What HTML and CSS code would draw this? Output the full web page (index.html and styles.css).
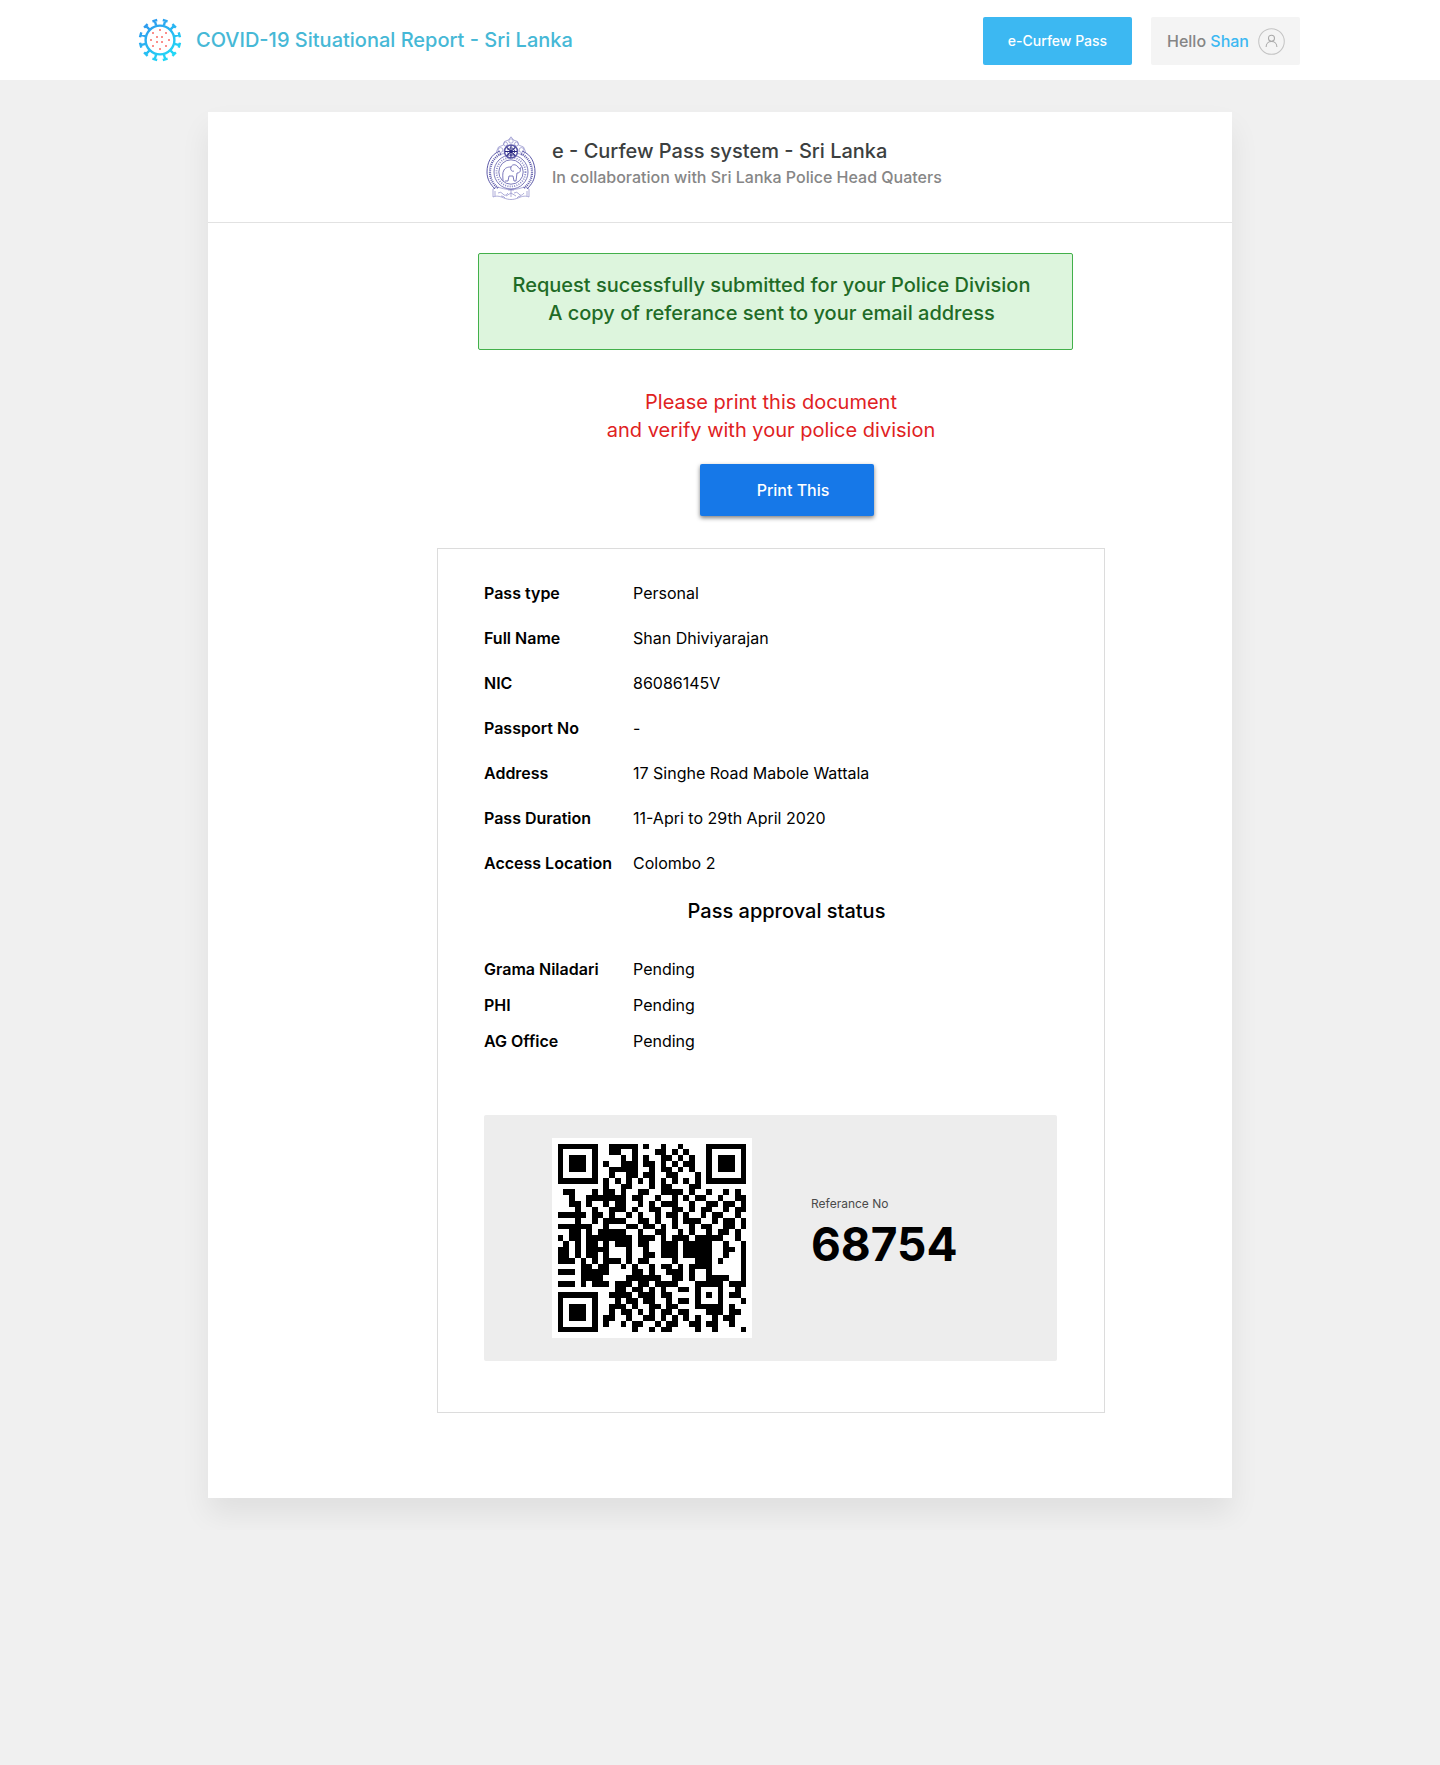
FILE: index.html
```html
<!DOCTYPE html>
<html lang="en">
<head>
<meta charset="utf-8">
<meta name="viewport" content="width=device-width, initial-scale=1">
<title>e-Curfew Pass - Sri Lanka</title>
<link rel="stylesheet" href="styles.css">
</head>
<body>
<header class="topbar">
  <div class="topbar-inner">
    <a class="brand" href="#">
      <svg class="brand-logo" viewBox="-22 -22 44 44" aria-hidden="true">
        <defs>
          <linearGradient id="virus" gradientUnits="userSpaceOnUse" x1="-14" y1="-20" x2="14" y2="20">
            <stop offset="0" stop-color="#2f95ee"/><stop offset="1" stop-color="#20dff7"/>
          </linearGradient>
        </defs>
        <g fill="none" stroke="url(#virus)" stroke-width="2.400">
          <circle r="14.400"/>
          <path d="M3.900-14.500 5.200-19.300M2.800-20 7.600-18.700M10.600-10.600 14.100-14.100M12.400-15.900 15.900-12.400M14.500-3.900 19.300-5.200M18.700-7.600 20-2.800M14.500 3.900 19.300 5.200M18.700 7.600 20 2.800M10.600 10.600 14.100 14.100M12.400 15.900 15.900 12.400M3.900 14.500 5.200 19.300M2.800 20 7.600 18.700M-3.900-14.500-5.200-19.300M-2.800-20-7.600-18.700M-10.600-10.600-14.100-14.100M-12.400-15.900-15.900-12.400M-14.500-3.900-19.300-5.200M-18.700-7.600-20-2.800M-14.500 3.900-19.300 5.200M-18.700 7.600-20 2.800M-10.600 10.600-14.100 14.100M-12.400 15.900-15.900 12.400M-3.900 14.500-5.200 19.300M-2.800 20-7.600 18.700"/>
        </g>
        <path fill="#fa8f8c" d="M-1-11h2v2h-2zM-8-8h2v2h-2zM5-8h2v2h-2zM-4-4h2v2h-2zM1-4h2v2h-2zM-10-1h2v2h-2zM8-1h2v2h-2zM-4 1h2v2h-2zM1 1h2v2h-2zM-8 5h2v2h-2zM5 5h2v2h-2zM-1 8h2v2h-2z"/>
      </svg>
      <span>COVID-19 Situational Report - Sri Lanka</span>
    </a>
    <nav class="topbar-actions">
      <button class="btn-pass" type="button">e-Curfew Pass</button>
      <button class="btn-user" type="button">
        <span>Hello <b>Shan</b></span>
        <svg class="avatar" viewBox="0 0 26 26" fill="none" stroke="#c4c4c4" aria-hidden="true">
          <circle cx="13" cy="13" r="12.300"/>
          <g stroke="#a9a9a9"><circle cx="13" cy="9.800" r="2.900"/><path d="M7.800 18.200c0-7 10.400-7 10.400 0"/></g>
        </svg>
      </button>
    </nav>
  </div>
</header>

<main class="card">
  <header class="card-head">
    <svg class="emblem" viewBox="0 0 50 64" fill="none" stroke="#5b58a8" aria-hidden="true">
      <g stroke-width=".7" stroke="#8d8bc8">
        <path d="M25 .8l2.500 3.200 4 1.500 1 3.500 5 2 2 4.500-2 3-6-1M25 .8l-2.500 3.200-4 1.500-1 3.500-5 2-2 4.500 2 3 6-1"/>
        <circle cx="25" cy="5" r="2.200"/><circle cx="19.500" cy="8" r="2"/><circle cx="30.500" cy="8" r="2"/>
        <circle cx="14.500" cy="14" r="2.400"/><circle cx="35.500" cy="14" r="2.400"/>
        <path d="M7 53c2-2 5-2 8-1 6 2 14 2 20 0 3-1 6-1 8 1v8c-5-2-8 0-11 1-5 2-9 2-14 0-3-1-6-3-11-1z"/>
        <path d="M12 57q3-2 5 1t5-1M28 57q3-2 5 1t5-1M20 60l5-3 5 3M22 54h6M25 53v8M9 55v5M41 55v5M15 60q3 0 4 2M35 60q-3 0-4 2"/>
      </g>
      <path d="M14 15C5 18 1 27 1 36c0 7 3 12 8 17M36 15c9 3 13 12 13 21 0 7-3 12-8 17" stroke-width="1"/>
      <path d="M15 18C8 21 4 28 4 36c0 7 3 12 8 16M35 18c7 3 11 10 11 18 0 7-3 12-8 16" stroke-width="2.200" stroke-dasharray="1 1"/>
      <circle cx="25" cy="36" r="17" stroke-width=".8"/>
      <circle cx="25" cy="36" r="14.500" stroke-width="1.800" stroke-dasharray="1 1.300" stroke="#8d8bc8"/>
      <circle cx="25" cy="36" r="12.200" stroke-width=".8"/>
      <path d="M17 45c0-4-1-8 1-11s5-3 7-3c1-3 5-3 7 0 1 2 3 2 3 0M19 45h3l1-5h4l1 5h2l1-8c3 0 4-2 3-5M25 31c-1 3 1 5 3 4" stroke-width=".9" stroke="#6e6bb5"/>
      <circle cx="25" cy="15.500" r="6.500" stroke-width="1.600"/>
      <path d="M25 9.500v12M19 15.500h12M20.800 11.300l8.400 8.400M29.200 11.300l-8.400 8.400" stroke="#25237f" stroke-width="1.100"/>
      <circle cx="25" cy="15.500" r="3.600" stroke="#25237f" stroke-width="1" stroke-dasharray="1.500 1"/>
    </svg>
    <div class="card-heading">
      <h1 class="card-title">e - Curfew Pass system - Sri Lanka</h1>
      <p class="card-sub">In collaboration with Sri Lanka Police Head Quaters</p>
    </div>
  </header>

  <div class="content">
    <p class="notice">Request sucessfully submitted for your Police Division<br>A copy of referance sent to your email address</p>
    <p class="warning">Please print this document<br>and verify with your police division</p>
    <div class="print-row"><button class="btn-print" type="button">Print This</button></div>

    <section class="pass">
      <table class="details">
        <tr><th scope="row">Pass type</th><td>Personal</td></tr>
        <tr><th scope="row">Full Name</th><td>Shan Dhiviyarajan</td></tr>
        <tr><th scope="row">NIC</th><td>86086145V</td></tr>
        <tr><th scope="row">Passport No</th><td>-</td></tr>
        <tr><th scope="row">Address</th><td>17 Singhe Road Mabole Wattala</td></tr>
        <tr><th scope="row">Pass Duration</th><td>11-Apri to 29th April 2020</td></tr>
        <tr><th scope="row">Access Location</th><td>Colombo 2</td></tr>
      </table>
      <h2 class="status-title">Pass approval status</h2>
      <table class="details approvals">
        <tr><th scope="row">Grama Niladari</th><td>Pending</td></tr>
        <tr><th scope="row">PHI</th><td>Pending</td></tr>
        <tr><th scope="row">AG Office</th><td>Pending</td></tr>
      </table>
      <div class="reference">
        <svg class="qr" viewBox="-1 -1 35 35" shape-rendering="crispEdges" role="img" aria-label="QR code"><path id="qr-modules"/></svg>
        <div class="ref-text">
          <p class="ref-label">Referance No</p>
          <p class="ref-number">68754</p>
        </div>
      </div>
    </section>
  </div>
</main>
<script src="qr.js"></script>
</body>
</html>
```
FILE: styles.css
```css
* { box-sizing: border-box; }

body {
  margin: 0;
  background: #f0f0f0;
  color: #000;
  font-family: Inter, "Open Sans", sans-serif;
  font-size: 16px;
  line-height: 24px;
}

h1, h2, p { margin: 0; }
button { border: 0; font: inherit; cursor: pointer; }

.topbar { padding-right: 2px; background: #fff; }
.topbar-inner {
  display: flex;
  align-items: center;
  justify-content: space-between;
  flex-wrap: wrap;
  gap: 16px;
  max-width: 1162px;
  min-height: 80px;
  margin: 0 auto;
}
.brand {
  display: flex;
  align-items: center;
  gap: 14px;
  color: #46b8d6;
  font-size: 20px;
  font-weight: 500;
  line-height: 28px;
  text-decoration: none;
}
.brand-logo { width: 44px; height: 44px; flex: none; }
.topbar-actions { display: flex; gap: 19px; padding-top: 2px; }
.btn-pass, .btn-user { width: 149px; height: 48px; border-radius: 2px; }
.btn-pass { background: #3cb8f2; color: #fff; font-size: 14px; font-weight: 500; }
.btn-user {
  display: flex;
  align-items: center;
  justify-content: space-between;
  padding: 0 15px 0 16px;
  background: #f4f4f4;
  color: #858585;
  font-weight: 500;
}
.btn-user b { color: #3cb8f2; font-weight: 500; }
.avatar { width: 27px; height: 27px; }

.card {
  max-width: 1024px;
  margin: 32px auto;
  padding-bottom: 85px;
  background: #fff;
  box-shadow: 0 16px 28px rgba(0, 0, 0, .07);
}
.card-head {
  display: flex;
  justify-content: center;
  gap: 16px;
  padding: 24px 16px 22px;
  border-bottom: 1px solid #e2e2e2;
}
.emblem { width: 50px; height: 64px; flex: none; }
.card-heading { flex: 0 1 402px; padding-top: 1px; }
.card-title { color: #3c3f3f; font-size: 20px; font-weight: 500; line-height: 28px; }
.card-sub { color: #868686; font-weight: 500; }

.content {
  width: 668px;
  max-width: 100%;
  margin: 0 auto;
}
.notice {
  margin: 30px 32px 0 41px;
  padding: 17px 16px 22px 8px;
  border: 1px solid #42b04a;
  border-radius: 2px;
  background: #ddf5dd;
  color: #1f6b26;
  font-size: 20px;
  font-weight: 500;
  line-height: 28px;
  text-align: center;
}
.warning {
  margin-top: 38px;
  color: #e0221f;
  font-size: 20px;
  line-height: 28px;
  text-align: center;
}
.print-row { display: flex; justify-content: center; padding: 20px 0 32px 32px; }
.btn-print {
  width: 174px;
  height: 52px;
  padding: 0 0 0 12px;
  border-radius: 2px;
  background: #1678e8;
  box-shadow: 0 2px 4px rgba(0, 0, 0, .5);
  color: #fff;
  font-weight: 500;
}

.pass { padding: 21px 47px 51px 46px; border: 1px solid #dcdcdc; }
.details { width: 100%; border-collapse: collapse; }
.details th, .details td { height: 45px; padding: 0; text-align: left; }
.details th { width: 149px; font-weight: 600; }
.details.approvals th, .details.approvals td { height: 36px; }
.status-title {
  margin: 12px 0 26px;
  padding-left: 32px;
  font-size: 20px;
  font-weight: 500;
  line-height: 28px;
  text-align: center;
}
.reference {
  display: flex;
  align-items: center;
  flex-wrap: wrap;
  gap: 59px;
  margin-top: 56px;
  padding: 23px 68px;
  border-radius: 2px;
  background: #ededed;
}
.qr { width: 200px; height: 200px; background: #fff; }
.ref-text { padding-bottom: 5px; }
.ref-label { color: #4a4a4a; font-size: 12px; line-height: 16px; }
.ref-number { font-size: 46px; font-weight: 700; line-height: 64px; }

@media (min-width: 1024px) {
  .content { margin-left: 229px; }
}
```
FILE: qr.js
```js
// Modules of the pass QR code, one string per row.
const rows = [
  "#######..#####.#..#..#....#######",
  "#.....#..##..#...##.#.#...#.....#",
  "#.###.#....#.#.#..##.#.#..#.###.#",
  "#.###.#.#..###.##.#.#.##..#.###.#",
  "#.###.#..#####..#.##.#.#..#.###.#",
  "#.....#..#..##.##..##...#.#.....#",
  "#######.#.#.#.#.#.#.#.#.#.#######",
  "........#..##...#.##...##........",
  ".##...#.##.#..##..####.#..#..#.#.",
  "..#..#######.##..#..#.#.##..#..##",
  "..##.#..#.##..#.#.###..#..##.##.#",
  "...#..#..###.#..##..##.#.##..#.##",
  "#####.##.#..#.#..#.##.#..#.##..#.",
  "...#..#.####..##.#..#.###..#.##.#",
  "######..#...##.##.#.#..#.##..##.#",
  "..##.#.#####..#..##..#.#..#.##.#.",
  "#.##.########.###.#.###.#####..#.",
  ".#.#.##.#.###.##..###.#####..#..#",
  "##.#.####...#..#..###.#####..##.#",
  "##.#.##.#...#..##.###.#####..#..#",
  "###.#.#.###.#.##....#...###.#...#",
  "....##.##..#.#..#.##.#.####.....#",
  "###.#####....##.#..###.#..#.....#",
  "....####....######..##.#..####..#",
  "###.#.###.###.##.####...#####.###",
  "..........##.##.#.#..##.#...#..#.",
  "#######..####.###.##....#.#.#.##.",
  "#.....#...#.##.##..#.##.#...#...#",
  "#.###.#..###.#..##.##...#####.#..",
  "#.###.#..#.##.#.#.##.##...###.##.",
  "#.###.#.##..#..##.#.#.#.#..#.##..",
  "#.....#.#..#.##..#.##..##.##..#..",
  "#######......#..#.##....#..#....#"
];

const runs = rows.flatMap((row, y) =>
  [...row.matchAll(/#+/g)].map(run => `M${run.index} ${y}h${run[0].length}v1h-${run[0].length}z`)
);
document.getElementById("qr-modules").setAttribute("d", runs.join(""));
```
